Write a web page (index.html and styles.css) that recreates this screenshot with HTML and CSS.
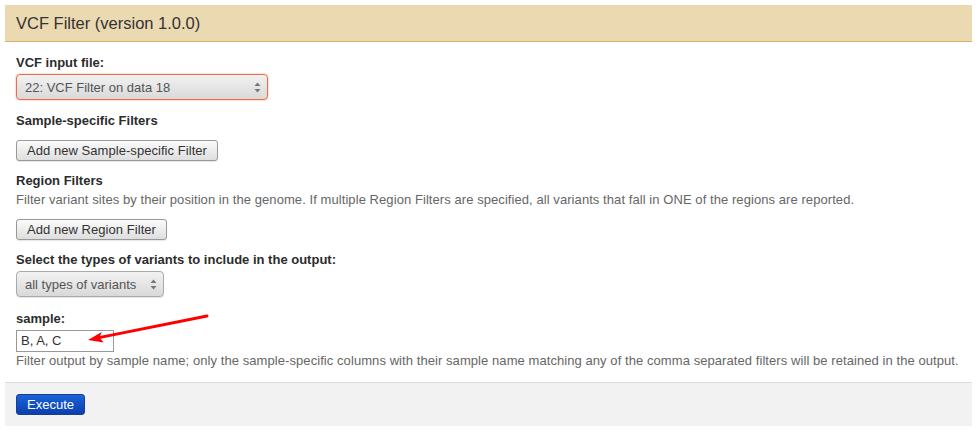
FILE: index.html
```html
<!DOCTYPE html>
<html>
<head>
<meta charset="utf-8">
<link rel="stylesheet" href="styles.css">
</head>
<body>
<div class="panel">
  <div class="panel-header">VCF Filter (version 1.0.0)</div>
  <div class="panel-body">
    <div class="row row-1">
      <div class="label">VCF input file:</div>
      <div class="select select-error select-wide">
        <span>22: VCF Filter on data 18</span>
        <svg class="spin" width="7" height="11" viewBox="0 0 7 11"><path d="M0.5 4 L3.5 0.5 L6.5 4 Z M0.5 7 L3.5 10.5 L6.5 7 Z" fill="#777"/></svg>
      </div>
    </div>
    <div class="row row-2">
      <div class="label">Sample-specific Filters</div>
      <div class="btn btn-1">Add new Sample-specific Filter</div>
    </div>
    <div class="row row-2">
      <div class="label">Region Filters</div>
      <div class="help">Filter variant sites by their position in the genome. If multiple Region Filters are specified, all variants that fall in ONE of the regions are reported.</div>
      <div class="btn btn-2">Add new Region Filter</div>
    </div>
    <div class="row row-4">
      <div class="label">Select the types of variants to include in the output:</div>
      <div class="select select-narrow">
        <span>all types of variants</span>
        <svg class="spin" width="7" height="11" viewBox="0 0 7 11"><path d="M0.5 4 L3.5 0.5 L6.5 4 Z M0.5 7 L3.5 10.5 L6.5 7 Z" fill="#777"/></svg>
      </div>
    </div>
    <div class="row row-sample">
      <div class="label">sample:</div>
      <div class="input">B, A, C</div>
      <div class="help">Filter output by sample name; only the sample-specific columns with their sample name matching any of the comma separated filters will be retained in the output.</div>
      <svg class="arrow" width="126" height="34" viewBox="0 0 126 34">
        <line x1="121" y1="2" x2="13" y2="23.6" stroke="#f00" stroke-width="3" stroke-linecap="round"/>
        <path d="M2 26 L15.7 18.1 L13.5 23.6 L17.7 28.4 Z" fill="#f00"/>
      </svg>
    </div>
  </div>
  <div class="panel-footer">
    <div class="btn-primary">Execute</div>
  </div>
</div>
</body>
</html>
```
FILE: styles.css
```css
html, body {
  margin: 0;
  padding: 0;
  background: #fff;
}
body {
  padding: 5px 6px 0 5px;
  font-family: "Liberation Sans", Arial, sans-serif;
  font-size: 13px;
  color: #333;
}
.panel {
  width: 967px;
}
.panel-header {
  height: 36px;
  background: #ebd9b2;
  border-bottom: 1px solid #d8b365;
  padding-left: 11px;
  font-size: 16.5px;
  line-height: 36px;
  color: #333;
}
.panel-body {
  padding: 11px 11px 12px 11px;
}
.row-1 { margin-bottom: 11px; }
.row-2 { margin-bottom: 10px; }
.row-4 { margin-bottom: 12px; }
.label {
  font-weight: bold;
  line-height: 19px;
  color: #2c2c2c;
  margin-bottom: 1px;
}
.help {
  color: #666;
  line-height: 18px;
  letter-spacing: 0.07px;
}
.select {
  box-sizing: border-box;
  height: 26px;
  margin-top: 2px;
  border: 1px solid #aaa;
  border-radius: 4px;
  background: linear-gradient(#f2f2f2, #d9d9d9);
  display: flex;
  align-items: center;
  justify-content: space-between;
  padding: 0 6px 0 8px;
  color: #555;
  box-shadow: 0 1px 1px rgba(0,0,0,0.1);
}
.select-error {
  border: 1px solid #e86f4a;
  box-shadow: 0 0 2px rgba(232,111,74,0.7);
}
.select-wide { width: 252px; }
.select-narrow { width: 148px; }
.spin { display: block; }
.btn {
  display: inline-block;
  box-sizing: border-box;
  height: 21px;
  line-height: 19px;
  padding: 0 10px;
  border: 1px solid #999;
  border-radius: 3px;
  background: linear-gradient(#fbfbfb, #dedede);
  color: #333;
  letter-spacing: 0.05px;
  box-shadow: 0 1px 1px rgba(0,0,0,0.1);
}
.btn-1 { margin-top: 9px; }
.btn-2 { margin-top: 10px; }
.row-sample {
  position: relative;
}
.input {
  box-sizing: border-box;
  width: 98px;
  height: 22px;
  margin-top: 2px;
  border: 1px solid #999;
  padding: 0 4px;
  line-height: 20px;
  color: #333;
  font-size: 13px;
}
.arrow {
  position: absolute;
  left: 70px;
  top: 5px;
}
.panel-footer {
  background: #f2f2f2;
  border-top: 1px solid #ddd;
  height: 44px;
  padding: 11px 0 0 11px;
  box-sizing: border-box;
}
.btn-primary {
  display: inline-block;
  box-sizing: border-box;
  height: 21px;
  line-height: 19px;
  padding: 0 10px;
  border: 1px solid #1a3e8c;
  border-radius: 3px;
  background: linear-gradient(#1a64d8, #0a3fb0);
  color: #fff;
}
```
